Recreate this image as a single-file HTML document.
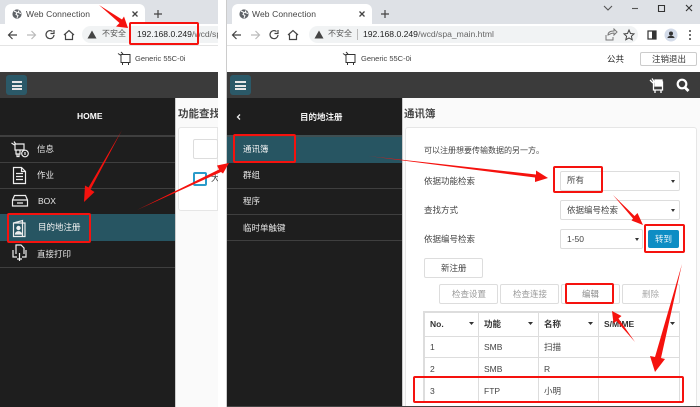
<!DOCTYPE html>
<html><head><meta charset="utf-8">
<style>
*{box-sizing:border-box;margin:0;padding:0}
html,body{width:700px;height:407px;overflow:hidden;background:#fff;font-family:"Liberation Sans","Noto Sans CJK SC",sans-serif}
#w{position:absolute;left:0;top:0;width:700px;height:407px;overflow:hidden;filter:blur(.35px)}
.a{position:absolute}
.t{position:absolute;white-space:nowrap;line-height:1}
.box{position:absolute;border:1px solid #ddd;border-radius:2px;background:#fff}
.r{position:absolute;border:2.500px solid #f5120e;border-radius:2px}
</style></head><body><div id="w">
<!-- LEFT WINDOW -->
<div class="a" style="left:0;top:0;width:218px;height:407px;overflow:hidden;background:#fff">
 <div class="a" style="left:0;top:0;width:218px;height:24px;background:#dee1e6"></div>
 <div class="a" style="left:5px;top:4px;width:140px;height:22px;background:#fff;border-radius:6px 6px 0 0"></div>
 <svg class="a" style="left:12px;top:9px" width="10" height="10" viewBox="0 0 10 10"><circle cx="5" cy="5" r="4.6" fill="#5f6368"/><path d="M2 2l3 1.500-1 2 2 1-1 2.500M7 1.500l-1 2 3 1" stroke="#fff" stroke-width="1" fill="none"/></svg>
 <div class="t" style="left:26px;top:10px;font-size:8.500px;color:#444;letter-spacing:.1px">Web Connection</div>
 <svg class="a" style="left:131px;top:10px" width="8" height="8"><path d="M1.500 1.500l5 5M6.500 1.500l-5 5" stroke="#444" stroke-width="1.300"/></svg>
 <svg class="a" style="left:153px;top:9px" width="10" height="10"><path d="M5 1v8M1 5h8" stroke="#444" stroke-width="1.200"/></svg>
 <div class="a" style="left:0;top:24px;width:218px;height:22px;border-bottom:1px solid #e4e4e4;background:#fff"></div>
 <svg class="a" style="left:7px;top:29px" width="70" height="12" fill="none"><path d="M10 6H2M5.500 2L1.500 6l4 4" stroke="#444" stroke-width="1.200"/><path d="M20 6h8M24.500 2l4 4-4 4" stroke="#bbb" stroke-width="1.200"/><path d="M45.500 2.500a4 4 0 1 0 1.500 3.500M47 1v3.500h-3.500" stroke="#444" stroke-width="1.200"/><path d="M57 6l5-4.500 5 4.500M58.500 5.500v5h7v-5" stroke="#444" stroke-width="1.200"/></svg>
 <div class="a" style="left:82px;top:26px;width:136px;height:17px;background:#f1f3f4;border-radius:9px 0 0 9px"></div>
 <svg class="a" style="left:87px;top:30px" width="10" height="9"><path d="M5 .5L9.500 8.500H.5z" fill="#444"/></svg>
 <div class="t" style="left:102px;top:30px;font-size:8px;color:#555">不安全</div>
 <div class="t" style="left:137px;top:30px;font-size:8.600px;color:#222">192.168.0.249<span style="color:#666">/wcd/sp</span></div>
 <svg class="a" style="left:117px;top:51px" width="16" height="15" fill="none" stroke="#333"><path d="M4 3.500h9v8H4zM5.500 11.500v2.500M11.500 11.500v2.500M1 2.500l3 2M4 1l2 2"/></svg>
 <div class="t" style="left:135px;top:55px;font-size:7.500px;color:#444">Generic 55C-0i</div>
 <div class="a" style="left:0;top:72px;width:218px;height:26px;background:#3b3b3b"></div>
 <div class="a" style="left:6px;top:75px;width:21px;height:20px;background:#2b5968;border-radius:3px"></div>
 <div class="a" style="left:12px;top:81px;width:10px;height:2px;background:#e6e6e6"></div>
 <div class="a" style="left:12px;top:84.500px;width:10px;height:2px;background:#e6e6e6"></div>
 <div class="a" style="left:12px;top:88px;width:10px;height:2px;background:#e6e6e6"></div>
 <div class="a" style="left:0;top:98px;width:175px;height:309px;background:#1e1e1e"></div>
 <div class="t" style="left:77px;top:112px;font-size:8.500px;font-weight:bold;color:#fff">HOME</div>
 <div class="a" style="left:0;top:135px;width:175px;height:2px;background:#3f3f3f"></div>
 <div class="a" style="left:0;top:162px;width:175px;height:1px;background:#3f3f3f"></div>
 <div class="a" style="left:0;top:188px;width:175px;height:1px;background:#3f3f3f"></div>
 <div class="a" style="left:0;top:214px;width:175px;height:27px;background:#275562"></div>
 <div class="a" style="left:0;top:267px;width:175px;height:1px;background:#3f3f3f"></div>
 <svg class="a" style="left:10px;top:140px" width="20" height="128" fill="none" stroke="#eee" stroke-width="1.200">
  <path d="M1.500 3l3 2M4 1.500l2 3M5 4h9v6H5zM6 10v4h4v-4M7 14v2.500h2V14"/><circle cx="15" cy="13.500" r="3.300"/><path d="M15 12v3"/>
  <path d="M3.500 27.500h8l4 4v12h-12zM11.500 27.500v4h4M6 33.500h7M6 36.500h7M6 39.500h7"/>
  <path d="M2.500 60l2-4.500h11l2 4.500v6h-15zM2.500 60h15M7 63h6"/>
  <path d="M3.500 83l9-2.500v16l-9 0zM3.500 83h11.500v13.500h-2.500"/><circle cx="8.500" cy="88" r="1.600" fill="#eee"/><path d="M5.500 94c0-3 6-3 6 0z" fill="#eee"/>
  <path d="M6 114v-9h5l3 3v6M3 110v7h4M16 110v7h-4M9.500 113v8M7 119h5"/>
 </svg>
 <div class="t" style="left:37px;top:145px;font-size:8.500px;color:#e8e8e8">信息</div>
 <div class="t" style="left:37px;top:171px;font-size:8.500px;color:#e8e8e8">作业</div>
 <div class="t" style="left:38px;top:197px;font-size:8.500px;color:#e8e8e8">BOX</div>
 <div class="t" style="left:38px;top:223px;font-size:8.500px;color:#f4f4f4">目的地注册</div>
 <div class="t" style="left:37px;top:250px;font-size:8.500px;color:#e8e8e8">直接打印</div>
 <div class="a" style="left:175px;top:98px;width:43px;height:309px;background:#fafafa;border-left:1px solid #ccc"></div>
 <div class="t" style="left:178px;top:109px;font-size:10.500px;font-weight:bold;color:#444">功能查找</div>
 <div class="a" style="left:178px;top:127px;width:40px;height:84px;background:#fff;border:1px solid #e6e6e6;border-radius:3px 0 0 3px"></div>
 <div class="a" style="left:193px;top:139px;width:25px;height:20px;border:1px solid #ddd;background:#fff;border-radius:2px"></div>
 <div class="a" style="left:193px;top:172px;width:14px;height:14px;border:2px solid #2a9bc9;border-radius:2px;background:#fff"></div>
 <div class="t" style="left:211px;top:174px;font-size:8.500px;color:#333">大</div>
</div>
<div class="a" style="left:226px;top:0;width:1px;height:407px;background:#ccc"></div>
<!-- RIGHT WINDOW -->
<div class="a" style="left:227px;top:0;width:473px;height:407px;overflow:hidden;background:#fff">
 <div class="a" style="left:0;top:0;width:473px;height:24px;background:#dee1e6"></div>
 <div class="a" style="left:5px;top:4px;width:140px;height:22px;background:#fff;border-radius:6px 6px 0 0"></div>
 <svg class="a" style="left:12px;top:9px" width="10" height="10" viewBox="0 0 10 10"><circle cx="5" cy="5" r="4.600" fill="#5f6368"/><path d="M2 2l3 1.500-1 2 2 1-1 2.500M7 1.500l-1 2 3 1" stroke="#fff" stroke-width="1" fill="none"/></svg>
 <div class="t" style="left:25px;top:10px;font-size:8.500px;color:#444;letter-spacing:.1px">Web Connection</div>
 <svg class="a" style="left:131px;top:10px" width="8" height="8"><path d="M1.500 1.500l5 5M6.500 1.500l-5 5" stroke="#444" stroke-width="1.300"/></svg>
 <svg class="a" style="left:153px;top:9px" width="10" height="10"><path d="M5 1v8M1 5h8" stroke="#444" stroke-width="1.200"/></svg>
 <svg class="a" style="left:373px;top:3px" width="100" height="12" fill="none" stroke="#555" stroke-width="1.100"><path d="M4 3l4 4 4-4"/><path d="M32 5.500h6"/><path d="M58.500 2.500h6v6h-6z" stroke="#333"/><path d="M86 2l6 6M92 2l-6 6" stroke="#333"/></svg>
 <div class="a" style="left:0;top:24px;width:473px;height:22px;border-bottom:1px solid #e4e4e4;background:#fff"></div>
 <svg class="a" style="left:4px;top:29px" width="70" height="12" fill="none"><path d="M10 6H2M5.500 2L1.500 6l4 4" stroke="#444" stroke-width="1.200"/><path d="M20 6h8M24.500 2l4 4-4 4" stroke="#bbb" stroke-width="1.200"/><path d="M45.500 2.500a4 4 0 1 0 1.500 3.500M47 1v3.500h-3.500" stroke="#444" stroke-width="1.200"/><path d="M57 6l5-4.500 5 4.500M58.500 5.500v5h7v-5" stroke="#444" stroke-width="1.200"/></svg>
 <div class="a" style="left:82px;top:26px;width:329px;height:17px;background:#f1f3f4;border-radius:9px"></div>
 <svg class="a" style="left:87px;top:30px" width="10" height="9"><path d="M5 .5L9.500 8.500H.5z" fill="#444"/></svg>
 <div class="t" style="left:101px;top:30px;font-size:8px;color:#555">不安全</div>
 <div class="a" style="left:130px;top:29px;width:1px;height:11px;background:#bbb"></div>
 <div class="t" style="left:136px;top:30px;font-size:8.600px;color:#222">192.168.0.249<span style="color:#666">/wcd/spa_main.html</span></div>
 <svg class="a" style="left:378px;top:28px" width="95" height="14" fill="none"><path d="M1 7v5h7v-3M3 7c0-3 3-4 6-4V1l3 3-3 3V5c-3 0-4 1-6 2z" stroke="#777"/><path d="M24 2l1.500 3.500 3.500.4-2.600 2.400.8 3.500L24 10l-3.200 1.800.8-3.500L19 5.900l3.500-.4z" stroke="#444"/><rect x="43" y="3" width="8" height="8" stroke="#333" stroke-width="1.200"/><rect x="47" y="3" width="4" height="8" fill="#333"/><circle cx="66" cy="7" r="6.500" fill="#d3dbe9"/><circle cx="66" cy="5.500" r="2" fill="#333"/><path d="M62.500 10c0-3 7-3 7 0z" fill="#333"/><circle cx="85" cy="3" r="1" fill="#444"/><circle cx="85" cy="7" r="1" fill="#444"/><circle cx="85" cy="11" r="1" fill="#444"/></svg>
 <svg class="a" style="left:115px;top:51px" width="16" height="15" fill="none" stroke="#333"><path d="M4 3.500h9v8H4zM5.500 11.500v2.500M11.500 11.500v2.500M1 2.500l3 2M4 1l2 2"/></svg>
 <div class="t" style="left:134px;top:55px;font-size:7.500px;color:#444">Generic 55C-0i</div>
 <div class="t" style="left:380px;top:55px;font-size:8.500px;color:#222">公共</div>
 <div class="a" style="left:413px;top:52px;width:57px;height:14px;border:1px solid #ccc;border-radius:2px"></div>
 <div class="t" style="left:425px;top:55px;font-size:8.500px;color:#333">注销退出</div>
 <div class="a" style="left:0;top:72px;width:473px;height:26px;background:#3b3b3b"></div>
 <div class="a" style="left:3px;top:75px;width:21px;height:20px;background:#2b5968;border-radius:3px"></div>
 <div class="a" style="left:8px;top:81px;width:11px;height:2px;background:#e6e6e6"></div>
 <div class="a" style="left:8px;top:84.500px;width:11px;height:2px;background:#e6e6e6"></div>
 <div class="a" style="left:8px;top:88px;width:11px;height:2px;background:#e6e6e6"></div>
 <svg class="a" style="left:422px;top:77px" width="46" height="17" fill="none" stroke="#fff" stroke-width="1.300"><path d="M4.500 5h9v8h-9zM6 13v3M12 13v3M1 3l3 3M3 1.500l2 3"/><path d="M6 3h7v6H6z" fill="#fff"/><circle cx="33" cy="7" r="4.300" stroke-width="2.200"/><path d="M36 10.500l3.500 3.500" stroke-width="2.800"/></svg>
 <div class="a" style="left:0;top:98px;width:175px;height:309px;background:#1e1e1e"></div>
 <svg class="a" style="left:8px;top:113px" width="8" height="8" fill="none"><path d="M5 1.500L2.500 4 5 6.500" stroke="#eee" stroke-width="1.300"/></svg>
 <div class="t" style="left:73px;top:113px;font-size:8.500px;color:#f2f2f2;font-weight:bold">目的地注册</div>
 <div class="a" style="left:0;top:135px;width:175px;height:28px;background:#275562;border-top:2px solid #3f4f52"></div>
 <div class="a" style="left:0;top:188px;width:175px;height:1px;background:#3f3f3f"></div>
 <div class="a" style="left:0;top:214px;width:175px;height:1px;background:#3f3f3f"></div>
 <div class="a" style="left:0;top:240px;width:175px;height:1px;background:#3f3f3f"></div>
 <div class="t" style="left:16px;top:145px;font-size:8.500px;color:#f4f4f4">通讯簿</div>
 <div class="t" style="left:16px;top:171px;font-size:8.500px;color:#e8e8e8">群组</div>
 <div class="t" style="left:16px;top:197px;font-size:8.500px;color:#e8e8e8">程序</div>
 <div class="t" style="left:16px;top:224px;font-size:8.500px;color:#e8e8e8">临时单触键</div>
 <div class="a" style="left:175px;top:98px;width:298px;height:309px;background:#fafafa;border-left:1px solid #ccc"></div>
 <div class="t" style="left:177px;top:109px;font-size:10.500px;font-weight:bold;color:#444">通讯簿</div>
 <div class="a" style="left:178px;top:127px;width:292px;height:285px;background:#fff;border:1px solid #e6e6e6;border-radius:3px"></div>
 <div class="t" style="left:197px;top:147px;font-size:8px;color:#444">可以注册想要传输数据的另一方。</div>
 <div class="t" style="left:197px;top:177px;font-size:8.500px;color:#444">依据功能检索</div>
 <div class="t" style="left:197px;top:206px;font-size:8.500px;color:#444">查找方式</div>
 <div class="t" style="left:197px;top:235px;font-size:8.500px;color:#444">依据编号检索</div>
 <div class="box" style="left:333px;top:171px;width:120px;height:20px"></div>
 <div class="t" style="left:340px;top:176px;font-size:8.500px;color:#444">所有</div>
 <div class="box" style="left:333px;top:200px;width:120px;height:20px"></div>
 <div class="t" style="left:340px;top:206px;font-size:8.500px;color:#444">依据编号检索</div>
 <div class="box" style="left:333px;top:229px;width:83px;height:20px"></div>
 <div class="t" style="left:340px;top:235px;font-size:8.500px;color:#444">1-50</div>
 <svg class="a" style="left:0;top:0" width="473" height="407"><path d="M444 180h4l-2 3zM444 209h4l-2 3zM408 238h4l-2 3z" fill="#333"/></svg>
 <div class="a" style="left:421px;top:230px;width:31px;height:18px;background:#0d8dc4;border-radius:2px"></div>
 <div class="t" style="left:428px;top:235px;font-size:8.500px;color:#e8f4fa">转到</div>
 <div class="box" style="left:197px;top:258px;width:59px;height:20px"></div>
 <div class="t" style="left:214px;top:264px;font-size:8.500px;color:#444">新注册</div>
 <div class="box" style="left:212px;top:284px;width:59px;height:20px"></div>
 <div class="t" style="left:225px;top:290px;font-size:8.500px;color:#999">检查设置</div>
 <div class="box" style="left:273px;top:284px;width:59px;height:20px"></div>
 <div class="t" style="left:286px;top:290px;font-size:8.500px;color:#999">检查连接</div>
 <div class="box" style="left:334px;top:284px;width:59px;height:20px"></div>
 <div class="t" style="left:355px;top:290px;font-size:8.500px;color:#888">编辑</div>
 <div class="box" style="left:395px;top:284px;width:58px;height:20px"></div>
 <div class="t" style="left:415px;top:290px;font-size:8.500px;color:#aaa">删除</div>
 <!-- table -->
 <div class="a" style="left:196px;top:311px;width:257px;height:91px;border:1px solid #ddd;border-top:2px solid #ddd;border-left:2px solid #ddd"></div>
 <div class="a" style="left:198px;top:336px;width:254px;height:1px;background:#ddd"></div>
 <div class="a" style="left:198px;top:357px;width:254px;height:1px;background:#ddd"></div>
 <div class="a" style="left:251px;top:312px;width:1px;height:90px;background:#ddd"></div>
 <div class="a" style="left:311px;top:312px;width:1px;height:90px;background:#ddd"></div>
 <div class="a" style="left:371px;top:312px;width:1px;height:90px;background:#ddd"></div>
 <div class="t" style="left:203px;top:320px;font-size:8.500px;font-weight:bold;color:#333">No.</div>
 <div class="t" style="left:257px;top:320px;font-size:8.500px;font-weight:bold;color:#333">功能</div>
 <div class="t" style="left:317px;top:320px;font-size:8.500px;font-weight:bold;color:#333">名称</div>
 <div class="t" style="left:377px;top:320px;font-size:8.500px;font-weight:bold;color:#333">S/MIME</div>
 <svg class="a" style="left:0;top:0" width="473" height="407"><path d="M242 322h5l-2.500 3zM301 322h5l-2.500 3zM361 322h5l-2.500 3zM443 322h5l-2.500 3z" fill="#333"/></svg>
 <div class="t" style="left:203px;top:343px;font-size:8.500px;color:#444">1</div>
 <div class="t" style="left:257px;top:343px;font-size:8.500px;color:#444">SMB</div>
 <div class="t" style="left:317px;top:343px;font-size:8.500px;color:#444">扫描</div>
 <div class="t" style="left:203px;top:365px;font-size:8.500px;color:#444">2</div>
 <div class="t" style="left:257px;top:365px;font-size:8.500px;color:#444">SMB</div>
 <div class="t" style="left:317px;top:365px;font-size:8.500px;color:#444">R</div>
 <div class="t" style="left:203px;top:387px;font-size:8.500px;color:#444">3</div>
 <div class="t" style="left:257px;top:387px;font-size:8.500px;color:#444">FTP</div>
 <div class="t" style="left:317px;top:387px;font-size:8.500px;color:#444">小明</div>
 <div class="a" style="left:0;top:406px;width:473px;height:1px;background:#444"></div>
</div>
<!-- RED ANNOTATIONS -->
<div class="r" style="left:129px;top:22px;width:70px;height:23px"></div>
<div class="r" style="left:7px;top:213px;width:84px;height:30px"></div>
<div class="r" style="left:233px;top:134px;width:63px;height:29px"></div>
<div class="r" style="left:553px;top:166px;width:50px;height:27px"></div>
<div class="r" style="left:644px;top:224px;width:41px;height:29px"></div>
<div class="r" style="left:565px;top:283px;width:49px;height:21px"></div>
<div class="r" style="left:413px;top:376px;width:271px;height:27px"></div>
<svg class="a" style="left:0;top:0" width="700" height="407">
 <g fill="#f5120e">
  <path d="M99 5L122 19.500 124 16.500 128 28 116 26.500 119.500 23z"/>
  <path d="M122 130L90.500 189.500 94.500 192 84 202 85 185.500 88.500 187.500z"/>
  <path d="M137 210L219 169.500 217 165.500 229 163 223 173.500 221 172z"/>
  <path d="M368 156L536 174.500 536 170.500 548 178 535 182 535 177.500z"/>
  <path d="M613 195L634.500 216 637.500 213 643 225 631.500 220.500 633 218.500z"/>
  <path d="M635 342L618.500 318.500 621.500 316 612 311 613.500 323.500 616.500 321z"/>
  <path d="M682 264L661 358 665 359 655 372 650 356 655 357z"/>
 </g>
</svg>
</div></body></html>
